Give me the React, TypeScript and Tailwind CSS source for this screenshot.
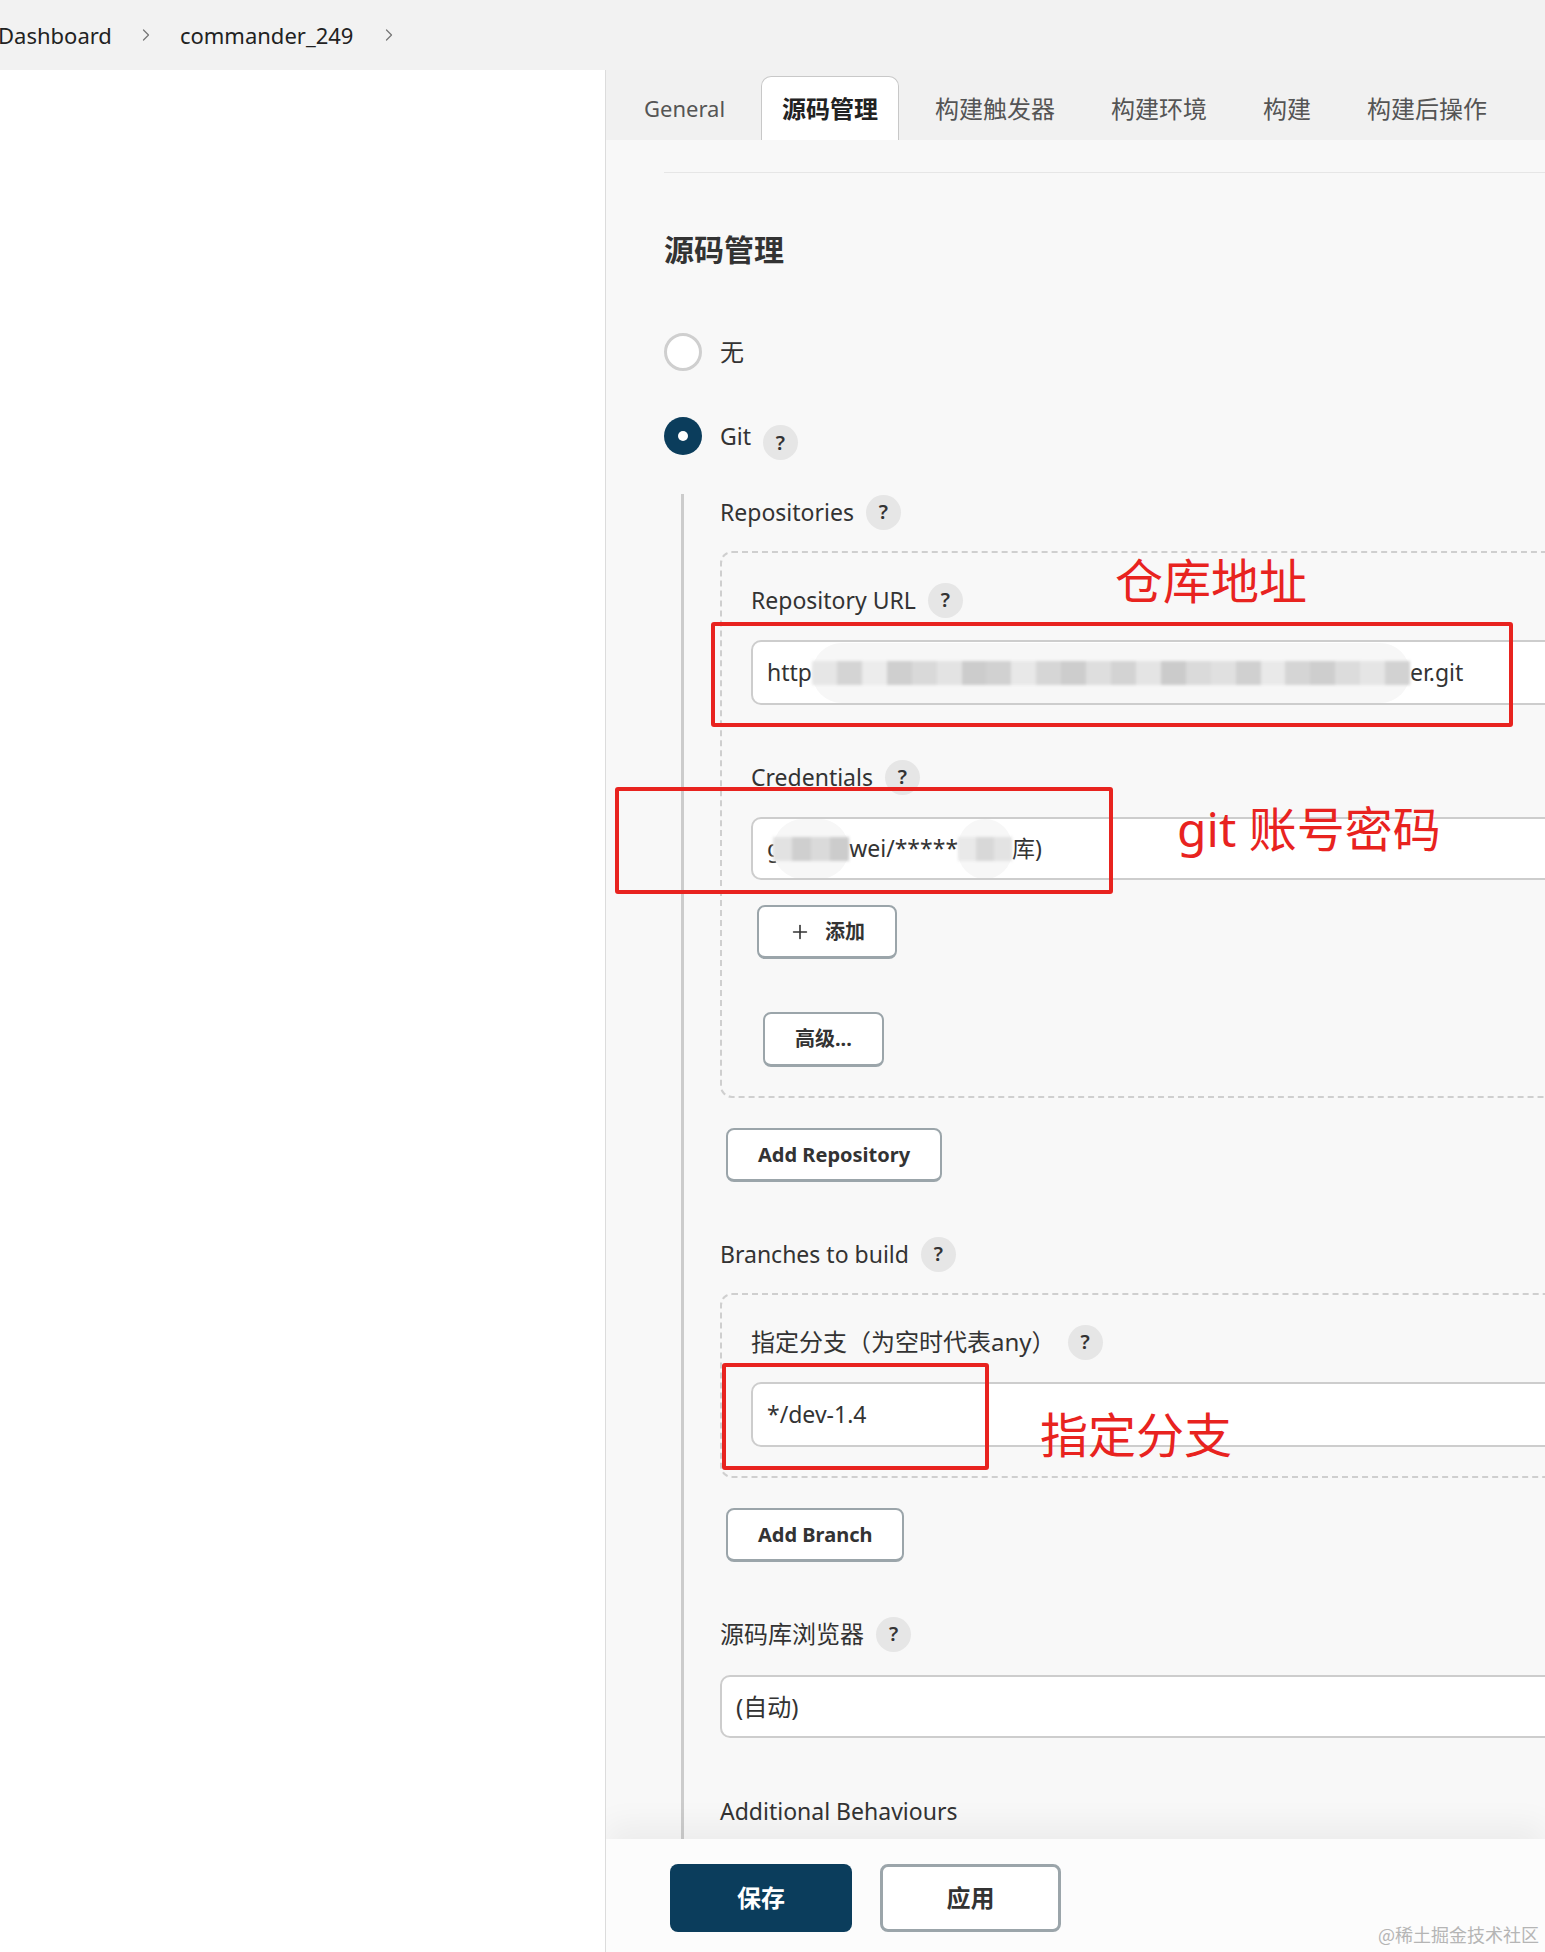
import { ChevronRight, Plus } from "lucide-react";

function Help() {
  return (
    <span className="ml-[12px] inline-flex h-[35px] w-[35px] items-center justify-center rounded-full bg-[#e6e6e6] text-[20px] font-semibold text-[#333]">
      ?
    </span>
  );
}

function Label({ children, cjk = false }: { children: React.ReactNode; cjk?: boolean }) {
  return (
    <div className={`flex h-[36px] items-center text-[#333] ${cjk ? "text-[24px]" : "text-[23px]"}`}>{children}</div>
  );
}

// gray pixel mosaic used where the original screenshot was blurred
function Mosaic({ width, shades }: { width: number; shades: string[] }) {
  return (
    <span className="relative inline-flex h-[60px] items-center rounded-full bg-[#f7f7f7]" style={{ width }}>
      <span className="flex h-[24px] w-full items-center blur-[1.5px]">
        {shades.map((c, i) => (
          <span key={i} className="h-full flex-1" style={{ backgroundColor: c }} />
        ))}
      </span>
    </span>
  );
}

const urlShades = [
  "#e6e6e6", "#d4d4d4", "#ececec", "#cfcfcf", "#d9d9d9", "#e3e3e3", "#cccccc", "#d1d1d1",
  "#e8e8e8", "#d6d6d6", "#cdcdcd", "#dedede", "#d3d3d3", "#e4e4e4", "#cbcbcb", "#dadada",
  "#e0e0e0", "#d0d0d0", "#e9e9e9", "#d5d5d5", "#cecece", "#dcdcdc", "#e5e5e5", "#d2d2d2",
];

function Btn({ children, className = "" }: { children: React.ReactNode; className?: string }) {
  return (
    <button
      className={`flex h-[54px] items-center rounded-[8px] border-2 border-b-[3px] border-[#9ba5aa] bg-white px-[30px] text-[20px] font-bold text-[#333] ${className}`}
    >
      {children}
    </button>
  );
}

const tabs = ["General", "源码管理", "构建触发器", "构建环境", "构建", "构建后操作"];

export default function App() {
  return (
    <div className="relative flex h-[1952px] w-[1545px] flex-col overflow-hidden bg-[#f2f2f2] font-['Noto_Sans','Noto_Sans_CJK_SC',sans-serif] text-[#333]">
      {/* breadcrumb */}
      <div className="flex h-[70px] shrink-0 items-center bg-[#f2f2f2] text-[22px] text-[#222]">
        <span className="-ml-[2px]">Dashboard</span>
        <ChevronRight className="ml-[24px] text-[#777]" size={20} strokeWidth={1.5} />
        <span className="ml-[24px]">commander_249</span>
        <ChevronRight className="ml-[26px] text-[#777]" size={20} strokeWidth={1.5} />
      </div>

      <div className="flex min-h-0 flex-1">
        <div className="w-[606px] shrink-0 border-r border-[#dcdcdc] bg-white" />

        <div className="flex min-w-0 flex-1 flex-col overflow-hidden">
          {/* tabs */}
          <div className="flex h-[70px] shrink-0 items-end gap-[16px] bg-[#f1f1f1] pl-[18px]">
            {tabs.map((t, i) =>
              i === 1 ? (
                <div
                  key={t}
                  className="flex h-[64px] items-center rounded-t-[10px] border border-b-0 border-[#c8c8c8] bg-white px-[20px] text-[24px] font-bold text-[#222]"
                >
                  {t}
                </div>
              ) : (
                <div
                  key={t}
                  className={`flex h-[63px] items-center px-[20px] text-[#555] ${i === 0 ? "text-[22px]" : "text-[24px]"}`}
                >
                  {t}
                </div>
              )
            )}
          </div>

          {/* content */}
          <div className="min-h-0 flex-1 overflow-hidden bg-[#f8f8f8] pl-[58px]">
            <div className="mt-[32px] border-t border-[#e6e6e6]" />
            <h2 className="pt-[59px] text-[30px] font-bold leading-[36px] text-[#333]">源码管理</h2>

            <div className="mt-[65px] flex h-[38px] items-center gap-[18px]">
              <span className="h-[38px] w-[38px] rounded-full border-[3px] border-[#cfcfcf] bg-white" />
              <span className="text-[24px]">无</span>
            </div>
            <div className="mt-[46px] flex h-[38px] items-center gap-[18px]">
              <span className="flex h-[38px] w-[38px] items-center justify-center rounded-full bg-[#0b3d5c]">
                <span className="h-[10px] w-[10px] rounded-full bg-white" />
              </span>
              <span className="flex items-center text-[23px]">
                Git
                <span className="mt-[12px]">
                  <Help />
                </span>
              </span>
            </div>

            <div className="ml-[17px] mt-[39px] border-l-[3px] border-[#cccccc] pb-[200px] pl-[36px]">
              <Label>
                Repositories <Help />
              </Label>

              <div className="mt-[21px] w-[1000px] rounded-[12px] border-2 border-dashed border-[#cfcfcf] pb-[29px] pl-[29px] pt-[29px]">
                <Label>
                  Repository URL <Help />
                </Label>
                <div className="mt-[22px] flex h-[65px] w-[900px] items-center overflow-hidden rounded-[10px] border-2 border-[#cdcdcd] bg-white pl-[14px] text-[23px] text-[#333]">
                  <span>http</span>
                  <Mosaic width={598} shades={urlShades} />
                  <span>er.git</span>
                </div>

                <div className="mt-[54px]">
                  <Label>
                    Credentials <Help />
                  </Label>
                </div>
                <div className="mt-[22px] flex h-[63px] w-[900px] items-center overflow-hidden rounded-[10px] border-2 border-[#cdcdcd] bg-white pl-[14px] text-[23px] text-[#333]">
                  <span>g</span>
                  <span className="-ml-[8px]">
                    <Mosaic width={76} shades={["#e2e2e2", "#cfcfcf", "#dadada", "#cccccc"]} />
                  </span>
                  <span>wei/*****</span>
                  <Mosaic width={54} shades={["#e9e9e9", "#d8d8d8", "#e3e3e3"]} />
                  <span>库)</span>
                </div>

                <Btn className="ml-[6px] mt-[25px] gap-[14px] px-[20px]">
                  <Plus size={22} strokeWidth={1.75} className="text-[#333]" />
                  添加
                </Btn>
                <Btn className="ml-[12px] mt-[53px] h-[55px]">高级...</Btn>
              </div>

              <Btn className="ml-[6px] mt-[30px]">Add Repository</Btn>

              <div className="mt-[54px]">
                <Label>
                  Branches to build <Help />
                </Label>
              </div>

              <div className="mt-[21px] w-[1000px] rounded-[12px] border-2 border-dashed border-[#cfcfcf] pb-[29px] pl-[29px] pt-[29px]">
                <Label cjk>
                  指定分支（为空时代表any） <Help />
                </Label>
                <div className="mt-[22px] flex h-[65px] w-[900px] items-center rounded-[10px] border-2 border-[#cdcdcd] bg-white pl-[14px] text-[23px] text-[#333]">
                  */dev-1.4
                </div>
              </div>

              <Btn className="ml-[6px] mt-[30px]">Add Branch</Btn>

              <div className="mt-[54px]">
                <Label cjk>
                  源码库浏览器 <Help />
                </Label>
              </div>
              <div className="mt-[23px] flex h-[63px] w-[900px] items-center rounded-[10px] border-2 border-[#cdcdcd] bg-white pl-[14px] text-[24px] text-[#333]">
                (自动)
              </div>

              <div className="mt-[55px]">
                <Label>Additional Behaviours</Label>
              </div>
            </div>
          </div>

          {/* sticky footer */}
          <div className="relative z-10 flex h-[113px] shrink-0 gap-[28px] bg-[#fcfcfc] pl-[64px] pt-[25px] shadow-[0_-14px_30px_rgba(0,0,0,0.05)]">
            <button className="flex h-[68px] w-[182px] items-center justify-center rounded-[8px] bg-[#0b3d5c] text-[24px] font-bold text-white">
              保存
            </button>
            <button className="flex h-[68px] w-[181px] items-center justify-center rounded-[8px] border-[3px] border-[#9ba5aa] bg-white text-[24px] font-bold text-[#333]">
              应用
            </button>
          </div>
        </div>
      </div>

      {/* red annotations drawn over the screenshot */}
      <div className="pointer-events-none absolute left-[711px] top-[622px] z-20 h-[105px] w-[802px] rounded-[3px] border-4 border-[#e8231f]" />
      <div className="pointer-events-none absolute left-[615px] top-[787px] z-20 h-[107px] w-[498px] rounded-[3px] border-4 border-[#e8231f]" />
      <div className="pointer-events-none absolute left-[722px] top-[1363px] z-20 h-[107px] w-[267px] rounded-[3px] border-4 border-[#e8231f]" />
      <div className="absolute left-[1115px] top-[553px] z-20 text-[48px] leading-[56px] text-[#e8231f]">仓库地址</div>
      <div className="absolute left-[1177px] top-[801px] z-20 text-[48px] leading-[56px] text-[#e8231f]">git 账号密码</div>
      <div className="absolute left-[1040px] top-[1407px] z-20 text-[48px] leading-[56px] text-[#e8231f]">指定分支</div>

      <div className="absolute bottom-[4px] right-[6px] z-20 font-['Noto_Sans_CJK_SC',sans-serif] text-[18px] text-[#b5b5b5]">
        @稀土掘金技术社区
      </div>
    </div>
  );
}
